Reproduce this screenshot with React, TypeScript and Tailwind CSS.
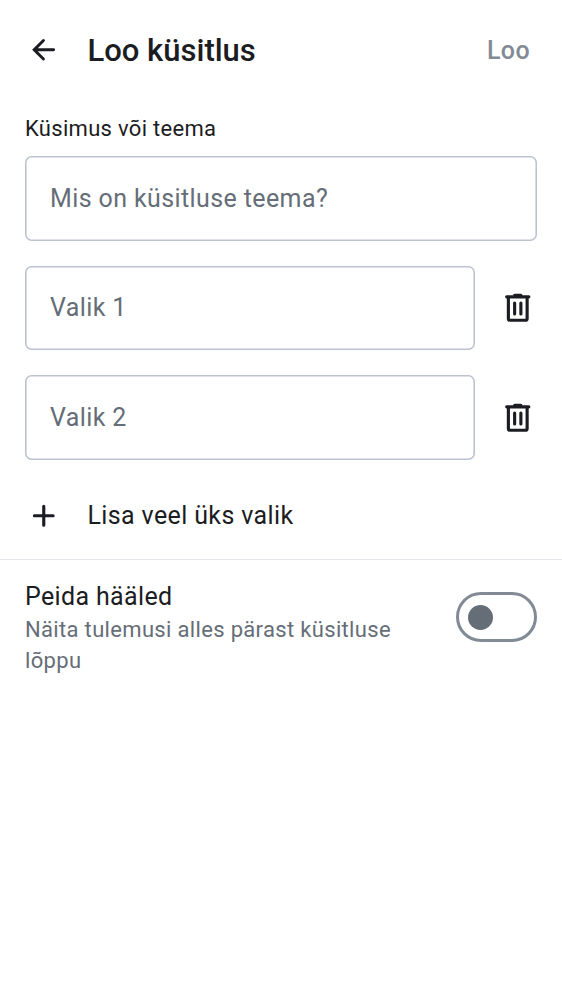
function Trash() {
  return (
    <svg className="h-[37.5px] w-[37.5px]" viewBox="0 0 24 24" fill="none" stroke="#1b1d22" strokeWidth="2" strokeLinecap="round" strokeLinejoin="round">
      <path d="M4.9 5h14.2M10 4h4" />
      <path d="M6 5.5V19a1 1 0 0 0 1 1h10a1 1 0 0 0 1-1V5.5" />
      <path d="M10 9v7M14 9v7" />
    </svg>
  );
}

function Option({ label }: { label: string }) {
  return (
    <div className="flex items-center justify-between">
      <div className="flex h-[84.4px] w-[450px] items-center rounded-[6.5px] px-[25px] text-[25px] tracking-[0.39px] text-[#656d77] shadow-[inset_0_0_0_1.6px_#bdc3cf]">{label}</div>
      <button className="mr-[0.4px] flex w-[37.5px] justify-center" aria-label="Kustuta"><Trash /></button>
    </div>
  );
}

export default function App() {
  return (
    <main className="h-[1000px] w-[562px] overflow-hidden bg-white font-[Roboto,sans-serif] text-[#1b1d22]">
      <header className="flex h-[100px] items-center pl-[25px] pr-8">
        <svg className="h-[37.5px] w-[37.5px]" viewBox="0 0 24 24" fill="none" stroke="#1b1d22" strokeWidth="1.9" strokeLinecap="round">
          <path d="M18.3 12H6M11.8 6.1L5.9 12l5.9 5.9" />
        </svg>
        <h1 className="ml-[25px] pt-0.5 text-[31px] font-medium">Loo küsitlus</h1>
        <button className="ml-auto pt-px text-[25px] font-medium tracking-[0.39px] text-[#818a95]">Loo</button>
      </header>
      <section className="px-[25px]">
        <div className="flex h-[56.3px] items-center text-[22px] tracking-[0.3px]">Küsimus või teema</div>
        <div className="flex h-[84.4px] items-center rounded-[6.5px] px-[25px] pt-[0.4px] text-[25px] tracking-[0.39px] text-[#656d77] shadow-[inset_0_0_0_1.6px_#bdc3cf]">Mis on küsitluse teema?</div>
        <div className="mt-[25.2px] flex flex-col gap-[25px]">
          <Option label="Valik 1" />
          <Option label="Valik 2" />
        </div>
      </section>
      <div className="mt-[12.3px] flex h-[88px] items-center border-b border-[#e3e7ec] pl-[25px]">
        <svg className="h-[37.5px] w-[37.5px]" viewBox="0 0 24 24" fill="none" stroke="#1b1d22" strokeWidth="2" strokeLinecap="round">
          <path d="M12 6v12M6 12h12" />
        </svg>
        <span className="ml-[25px] text-[25px] tracking-[0.37px]">Lisa veel üks valik</span>
      </div>
      <section className="flex items-center justify-between px-[25px] pt-[18px]">
        <div className="w-[390px]">
          <div className="text-[25px] leading-[37px] tracking-[0.35px]">Peida hääled</div>
          <div className="-mt-px text-[22px] leading-[31px] tracking-[0.33px] text-[#656d77]">Näita tulemusi alles pärast küsitluse lõppu</div>
        </div>
        <button role="switch" aria-checked="false" aria-label="Peida hääled" className="-mt-[19.6px] flex h-[50px] w-[81px] items-center rounded-full border-[3px] border-[#818a95] pl-[9px]">
          <span className="h-[25px] w-[25px] rounded-full bg-[#656d77]" />
        </button>
      </section>
    </main>
  );
}
